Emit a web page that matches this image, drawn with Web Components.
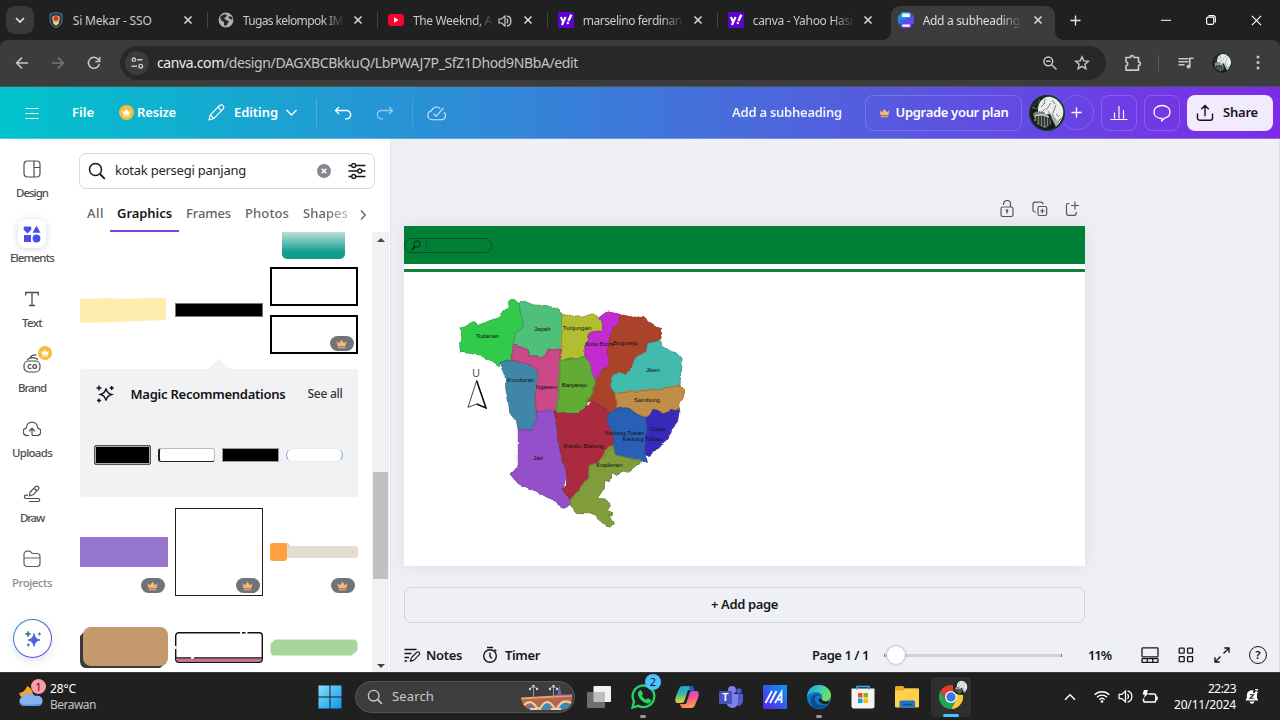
<!DOCTYPE html>
<html lang="id">
<head>
<meta charset="utf-8">
<title>Add a subheading</title>
<style>
html,body{margin:0;padding:0;overflow:hidden;background:#202020}
body{width:1280px;height:720px;font-family:"Noto Sans","Open Sans",sans-serif}
</style>
</head>
<body>
<app-shell></app-shell>
<script>
const ICONS = {
 chevDown:['0 0 12 12','<path d="M2 4l4 4 4-4" fill="none" stroke="currentColor" stroke-width="1.6"/>'],
 chevThin:['0 0 12 12','<path d="M2 4l4 4 4-4" fill="none" stroke="currentColor" stroke-width="1.1"/>'],
 x:['0 0 10 10','<path d="M1.5 1.5l7 7M8.5 1.5l-7 7" stroke="currentColor" stroke-width="1.5"/>'],
 winx:['0 0 12 12','<path d="M1 1l10 10M11 1L1 11" stroke="currentColor" stroke-width="1.3"/>'],
 plus:['0 0 12 12','<path d="M6 0.5v11M.5 6h11" stroke="currentColor" stroke-width="1.5"/>'],
 min:['0 0 10 10','<path d="M0 5.3h10" stroke="currentColor" stroke-width="1"/>'],
 restore:['0 0 10 10','<rect x=".6" y="2.1" width="7.2" height="7.2" rx="1.5" fill="none" stroke="currentColor" stroke-width="1.2"/><path d="M2.5.6h4.7a2.2 2.2 0 0 1 2.2 2.2v4.6" fill="none" stroke="currentColor" stroke-width="1.1"/>'],
 shield:['0 0 16 16','<path d="M8 .5l6 1.5v6c0 4-2.500 6-6 7.500C4.500 14 2 12 2 8V2z" fill="#16384f" stroke="#5c8796" stroke-width=".9"/><path d="M4 5c2-2 6-2 8 0l-1 6-3 3-3-3z" fill="#d9a93f"/><circle cx="8" cy="6.500" r="2.200" fill="#c72f35"/><path d="M5 9l3 2 3-2-1 3-2 1-2-1z" fill="#f3dc9a"/>'],
 globe:['0 0 16 16','<circle cx="8" cy="8" r="7.400" fill="#aeb1b6"/><path d="M3 4c2-1 4-3 6-1l-1 2-2 1 2 2 3 1-1 2-2 3-2-1V10L4 9 2 6zM11 4l3 1 .5 3-2-1-2-1z" fill="#25272a"/>'],
 yt:['0 0 18 14','<rect x="1" y="1" width="16" height="12" rx="3" fill="#f03"/><path d="M7 4.300v5.400L11.600 7z" fill="#fff"/>'],
 yahoo:['0 0 16 16','<rect width="16" height="16" fill="#5f01d1"/><path d="M2.800 5l2.400 5L7.600 5M5.200 10L4 13" fill="none" stroke="#fff" stroke-width="2.100"/><path d="M10.400 9L13.300 2.800" stroke="#fff" stroke-width="2.400"/><circle cx="9.800" cy="11" r="1.200" fill="#fff"/>'],
 canva:['0 0 16 16','<defs><linearGradient id="g" gradientUnits="userSpaceOnUse" x1="2" x2="12" y1="0" y2="16"><stop stop-color="#10c3d4"/><stop offset=".55" stop-color="#3a5ce8"/><stop offset="1" stop-color="#9b2be8"/></linearGradient></defs><path d="M5 0h6q2.500 0 2.500 2.800Q16 3 16 5.500V10q0 2.500-2.500 2.700Q13.500 16 11 16H5q-2.500 0-2.500-3.300Q0 12.500 0 10V5.500Q0 3 2.500 2.800 2.500 0 5 0z" fill="url(#g)"/><rect x="4.300" y="1.600" width="7.500" height="3.500" fill="#fff"/><rect x="4.300" y="12.500" width="7.500" height="2.200" fill="#fff"/>'],
 speaker:['0 0 14 14','<path d="M1 5h2.600L7 2v10L3.600 9H1z" fill="none" stroke="currentColor" stroke-width="1.200"/><path d="M8.800 4.800a3 3 0 0 1 0 4.400M9 1.800a5.400 5.400 0 0 1 0 10.400" fill="none" stroke="currentColor" stroke-width="1.200"/>'],
 back:['0 0 14 14','<path d="M13 7H1.800M7 1.600L1.600 7 7 12.400" fill="none" stroke="currentColor" stroke-width="1.500"/>'],
 fwd:['0 0 14 14','<path d="M1 7h11.200M7 1.600L12.400 7 7 12.400" fill="none" stroke="currentColor" stroke-width="1.500"/>'],
 reload:['0 0 14 14','<path d="M12.300 8A5.500 5.500 0 1 1 11.300 3.500L12.500 5" fill="none" stroke="currentColor" stroke-width="1.500"/><path d="M12.700 1v4.400H8.300" fill="none" stroke="currentColor" stroke-width="1.500"/>'],
 tune:['0 0 14 14','<g fill="none" stroke="currentColor" stroke-width="1.400"><circle cx="3.800" cy="3.700" r="1.700"/><path d="M7 3.700h5.500M1.500 10.200H7"/><circle cx="10.700" cy="10.200" r="1.800"/></g>'],
 zoomout:['0 0 16 16','<g fill="none" stroke="currentColor" stroke-width="1.500"><circle cx="6.300" cy="6.300" r="4.400"/><path d="M9.700 9.700l4.800 4.800M4 6.300h4.600"/></g>'],
 star:['0 0 16 16','<path d="M8 1.800l1.800 4.100 4.500.4-3.400 3 1 4.400L8 11.400l-3.900 2.300 1-4.400-3.400-3 4.500-.4z" fill="none" stroke="currentColor" stroke-width="1.400"/>'],
 ext:['0 0 18 18','<path d="M2 3.500h4.500a1.800 1.800 0 0 1 3.600 0H14.500v4.300a1.800 1.800 0 0 1 0 3.600v4.700H2v-4.300c2.400-.5 2.400-3.500 0-4z" fill="none" stroke="currentColor" stroke-width="1.700" stroke-linejoin="round"/>'],
 queue:['0 0 16 14','<path d="M.5 2.700h10M.5 5.700h10M.5 8.700h6" stroke="currentColor" stroke-width="1.400"/><circle cx="10.600" cy="10.500" r="2" fill="currentColor"/><path d="M11.800 10.500V2.200H15.500" fill="none" stroke="currentColor" stroke-width="1.600"/>'],
 dots:['0 0 4 16','<g fill="currentColor"><circle cx="2" cy="2" r="1.500"/><circle cx="2" cy="7.500" r="1.500"/><circle cx="2" cy="13" r="1.500"/></g>'],
 avatar:['0 0 36 36','<defs><clipPath id="c"><circle cx="18" cy="18" r="17.500"/></clipPath></defs><g clip-path="url(#c)"><rect width="36" height="36" fill="#151a17"/><path d="M9 15C9 6 15 1 23 1c8 1 13 8 12 15-1 6-3 10-6 14l-4-5-4-6-6 1-6-2z" fill="#eceeec"/><path d="M4 19c4-4 8-3 12 0l5 3 1 7-6 4-8-4z" fill="#7c847f"/><path d="M8 20v8M11 21v9M14 21v10M17 22v9M20 22v8" stroke="#0e120f" stroke-width="1.300"/><path d="M6 21q8-3 14 1" stroke="#f0f2f0" fill="none"/><path d="M12 12l4-4m1 7l5-7m2 10l3-8m-14 7l3-3m7-9l3 4m-10-5l-1 5m8 9l3 8M12 17l4 1m3-2l3 5m5-2l3 3" stroke="#5f6661" stroke-width=".8" fill="none"/><path d="M3 13l8-9-3 10zM4 12l4 2M27 30l5-7" stroke="#4a554e" fill="none"/><path d="M22 22l5 10 3-3-4-7z" fill="#a9afab"/><circle cx="6" cy="25" r="1.200" fill="#c4572c"/></g><circle cx="18" cy="18" r="17.200" fill="none" stroke="#12382d" stroke-width="1.600"/>'],
 burger:['0 0 14 12','<path d="M.5 1.500h13M.5 6.500h13M.5 11.500h13" stroke="currentColor" stroke-width="1.100"/>'],
 crownDisc:['0 0 14 14','<circle cx="7" cy="7" r="7" fill="#f5bd3b"/><path d="M3.200 4.800l2 1.500L7 3.500l1.800 2.800 2-1.500-.8 4H4zM4.200 9.600h5.600v1H4.200z" fill="#fff"/>'],
 crown:['0 0 10 10','<path d="M.5 3l2.300 1.800L5 1.500l2.200 3.300L9.500 3l-1 4.500h-7zM1.600 8.300h6.800v1H1.600z" fill="#ffb570"/>'],
 pencil:['0 0 17 17','<g fill="none" stroke="currentColor" stroke-width="1.200" stroke-linejoin="round"><path d="M1 16l1.300-5.200L11.500 1.600c1.200-1.100 2.600-.9 3.500 0s1.100 2.300 0 3.500L5.900 14.400zM10 3.200l3.600 3.600M2.300 10.800l3.600 3.600"/></g>'],
 undo:['0 0 18 14','<path d="M5 1L1.500 4.500 5 8M1.500 4.500h11a4.200 4.200 0 0 1 0 8.400H11" fill="none" stroke="currentColor" stroke-width="1.300"/>'],
 redo:['0 0 18 14','<path d="M13 1l3.500 3.500L13 8M16.500 4.500h-11a4.200 4.200 0 0 0 0 8.400H7" fill="none" stroke="currentColor" stroke-width="1.300"/>'],
 cloudok:['0 0 19 16','<path d="M13.300 3.600A5.400 5.400 0 0 0 4.300 6C2 6.500.8 8.200.8 10.200c0 2.600 2 4.500 4.600 4.500h8.800a4 4 0 0 0 2.600-7.200M6.500 8.700l2.700 2.500L16.500 3" fill="none" stroke="currentColor" stroke-width="1.100"/>'],
 chart:['0 0 18 18','<path d="M.5 15.500h17M4.500 14.500V8.500M9 14.500V2M13.500 14.500V6" stroke="currentColor" stroke-width="1.200"/>'],
 chat:['0 0 18 18','<path d="M9 1.500c4.500 0 8 2.700 8 6.500 0 3.400-2.600 5.500-5.500 6.200L8.800 16.800V14.500C4 14.400 1 11.700 1 8s3.500-6.500 8-6.500z" fill="none" stroke="currentColor" stroke-width="1.300"/>'],
 share:['0 0 18 18','<path d="M1.500 9.500v4.700a2 2 0 0 0 2 2h11a2 2 0 0 0 2-2V9.500M9 12.200V1.700M5.200 5.200L9 1.500l3.800 3.700" fill="none" stroke="currentColor" stroke-width="1.400"/>'],
 design:['0 0 18 18','<g fill="none" stroke="currentColor" stroke-width="1.200"><rect x="1" y="1" width="16" height="16" rx="3.500"/><path d="M11 1v16M11 7.500h6"/></g>'],
 elements:['0 0 18 18','<g fill="#454ff0"><path d="M4.500 8.500L1 5C-.5 3 1.800-.2 4.500 2 7.200-.2 9.500 3 8 5z"/><path d="M13.500.8l4 7h-8z"/><rect x="1" y="10" width="7" height="7"/><circle cx="13.500" cy="13.500" r="3.900"/></g>'],
 text:['0 0 16 16','<path d="M1.700 4.500V1.500h12.600v3M8 1.500v13M5 14.500h6" fill="none" stroke="currentColor" stroke-width="1.300"/>'],
 brand:['0 0 18 19','<g fill="none" stroke="currentColor" stroke-width="1.200"><rect x="1" y="7" width="16" height="11" rx="4.500"/><path d="M4 5.500C8 3 12 3 15 5.500M7 3.200c2-1.800 5-2.500 6.500-2"/><path d="M8.300 11a2 2 0 1 0 0 3"/><circle cx="11.700" cy="12.500" r="1.900"/></g>'],
 uploads:['0 0 18 16','<g fill="none" stroke="currentColor" stroke-width="1.200"><path d="M6 14.500H4.500A3.800 3.800 0 0 1 3.300 7C3.300 3.500 6 1 9 1s5.700 2.500 5.700 6a3.800 3.800 0 0 1-1.200 7.500H10q-1 0-1-1V7.500M6 10.200L9 7.300l3 2.900"/></g>'],
 draw:['0 0 18 18','<g fill="none" stroke="currentColor" stroke-width="1.200" stroke-linejoin="round"><path d="M6.300 11l.8-4L12.600 1.600c2-1.500 4.200.8 2.700 2.700L10 9.800zM11 3l3 3M5 10.200H3a1.600 1.600 0 0 0 0 3.300h12.200a1.500 1.500 0 0 1 0 3H6"/></g>'],
 projects:['0 0 18 18','<path d="M1 13.500V4.300A3 3 0 0 1 4 1.200h3l2.200 2.300H14a3 3 0 0 1 3 3v7a3 3 0 0 1-3 3H4a3 3 0 0 1-3-3zM1 8h16" fill="none" stroke="currentColor" stroke-width="1.200"/>'],
 sparkles:['0 0 18 18','<path d="M10 3.500Q10.800 9 16 10 10.800 11 10 16.500 9.200 11 4 10 9.200 9 10 3.500z" fill="#4b60dd" stroke="#4b60dd" stroke-width=".8"/><path d="M4 1q.4 2.700 3 3-2.600.4-3 3-.4-2.600-3-3 2.600-.3 3-3z" fill="#25848f" stroke="#25848f" stroke-width=".5"/><path d="M15.500 2q.3 1.700 2 2-1.700.3-2 2-.3-1.700-2-2 1.700-.3 2-2zM4.300 13q.3 1.700 2 2-1.700.3-2 2-.3-1.700-2-2 1.700-.3 2-2z" fill="#3d6bce"/>'],
 magic:['0 0 18 18','<path d="M10 3.500q1 4.800 5.500 6-4.500 1.200-5.500 6-1-4.800-5.500-6 4.500-1.200 5.500-6z" fill="none" stroke="currentColor" stroke-width="1.300"/><path d="M3 .5v5M.5 3h5M15.700 1v4M13.700 3h4M3 13.500v4M1 15.500h4" stroke="currentColor" stroke-width="1.400"/>'],
 search:['0 0 18 18','<circle cx="7.500" cy="7.500" r="6" fill="none" stroke="currentColor" stroke-width="1.500"/><path d="M12 12l4.800 4.800" stroke="currentColor" stroke-width="1.800"/>'],
 sliders:['0 0 18 16','<g fill="none" stroke="currentColor" stroke-width="1.300"><path d="M.5 2.500h3M8 2.500h9.500M.5 8h9M14 8h3.500M.5 13.500h3M8 13.500h9.500"/><circle cx="5.700" cy="2.500" r="2"/><circle cx="11.700" cy="8" r="2"/><circle cx="5.700" cy="13.500" r="2"/></g>'],
 clear:['0 0 14 14','<circle cx="7" cy="7" r="7" fill="#85898f"/><path d="M4.700 4.700l4.600 4.600M9.300 4.700L4.700 9.300" stroke="#fff" stroke-width="1.500"/>'],
 right:['0 0 8 12','<path d="M2 1.500L6.300 6 2 10.500" fill="none" stroke="currentColor" stroke-width="1.400"/>'],
 lock:['0 0 14 18','<g fill="none" stroke="currentColor" stroke-width="1.200"><rect x="1" y="7" width="12" height="9.500" rx="1.800"/><path d="M3.500 5V4a3.500 3.500 0 0 1 7 0v3"/></g><circle cx="7" cy="10.500" r="1.300" fill="currentColor"/><path d="M7 10.500v3" stroke="currentColor" stroke-width="1.200"/>'],
 dup:['0 0 16 16','<g fill="none" stroke="currentColor" stroke-width="1.200"><rect x="6" y="5.500" width="8.700" height="9" rx="1.500"/><path d="M4 11H3a2 2 0 0 1-2-2V3.200a2 2 0 0 1 2-2h6a2 2 0 0 1 2 2M10.400 7.700v4.600M8.100 10h4.600"/></g>'],
 addpg:['0 0 15 16','<path d="M4.500 2.500H2.700Q1.500 2.500 1.500 4v8.300a2 2 0 0 0 2 2h5.700a2 2 0 0 0 2-2v-1.500M10 .5v8M6 4.500h8" fill="none" stroke="currentColor" stroke-width="1.200"/>'],
 notes:['0 0 17 14','<g fill="none" stroke="currentColor" stroke-width="1.400"><path d="M.5 1.500h12M.5 5.500h7M.5 9.500h4.500M.5 13H3"/><path d="M6.500 13.200l.8-3.400 5.500-5.500c1.700-1.300 3.600.7 2.400 2.300L9.700 12.300z" stroke-width="1.200"/></g>'],
 timer:['0 0 16 18','<g fill="none" stroke="currentColor" stroke-width="1.400"><circle cx="8" cy="10" r="6.300"/><path d="M8 6.500V10.500l2 2M5 1.500h6M12.500 3.500l1.800 1.800"/></g>'],
 layout:['0 0 18 16','<g fill="none" stroke="currentColor" stroke-width="1.300"><rect x="1" y=".8" width="16" height="9" rx=".8"/><rect x="1" y="11.700" width="16" height="3.700" rx=".5"/><path d="M6.300 12v3M11.700 12v3"/></g>'],
 grid4:['0 0 16 16','<g fill="none" stroke="currentColor" stroke-width="1.300"><rect x="1.200" y="1.200" width="5" height="5" rx=".6"/><rect x="9.600" y="1.200" width="5" height="5" rx=".6"/><rect x="1.200" y="9.600" width="5" height="5" rx=".6"/><rect x="9.600" y="9.600" width="5" height="5" rx=".6"/></g>'],
 expand:['0 0 16 16','<path d="M9.500 6.500L15 1M10.300 1H15v4.700M6.500 9.500L1 15M5.700 15H1v-4.700" fill="none" stroke="currentColor" stroke-width="1.400"/>'],
 cloudmoon:['0 0 26 22','<path d="M1 8c4-.4 7-3 8-7 5 2 8 8 4 13-5 2-10 0-12-6z" fill="#f5a623"/><path d="M5 21a5 5 0 0 1 0-9.500c1-4 10-4.500 12-.5 4-1 8 1 7.500 5a5 5 0 0 1-4.500 5z" fill="#86b2f0"/><path d="M2 18c5 2 17 2 22 0-1 2-2 3-4 3H5q-2-1-3-3z" fill="#5f92df"/>'],
 win:['0 0 24 24','<defs><linearGradient id="w" gradientUnits="userSpaceOnUse" x2="24" y2="24"><stop stop-color="#8be0fc"/><stop offset="1" stop-color="#0b93ef"/></linearGradient></defs><path d="M.5.500h11v11H.5zM12.500.5h11v11h-11zM.5 12.500h11v11H.5zM12.500 12.500h11v11h-11z" fill="url(#w)"/>'],
 bridge:['0 0 52 26','<path d="M0 14L51 11q1 14-10 15H11Q1 24 0 14z" fill="#b0684e"/><path d="M6 25q3-6 8 0zM19 25q5-12 13 0zM36 25q6-10 13-4-3 4-8 4z" fill="#2e91c4"/><path d="M3 21q7-7 13 3l3 1q7-14 15 0l2 0q5-11 14-6" fill="none" stroke="#f3cfa0" stroke-width="2.200"/><path d="M9 25h7M30 25h10" stroke="#ead2b8" stroke-width="1.800"/><path d="M0 14.500L51 11.500" stroke="#f09d71" stroke-width="1.800"/><path d="M12.500 14V1M9 5q0-2 3.500-2t3.500 2M32.500 13V1M29 5q0-2 3.500-2t3.500 2" fill="none" stroke="#9a96b2" stroke-width="1"/><path d="M36 11.500l2.500-11 2 10h9v1z" fill="#6c63ae"/><g fill="#d7dceb"><circle cx="9" cy="5" r="1.200"/><circle cx="12.500" cy="2" r="1.200"/><circle cx="16" cy="5" r="1.200"/><circle cx="29" cy="5" r="1.200"/><circle cx="32.500" cy="2" r="1.200"/><circle cx="36" cy="5" r="1.200"/></g>'],
 task:['0 0 24 24','<rect x="6.500" y="1" width="17.500" height="16" rx="1" fill="#f2f2f2"/><rect x="0" y="7" width="18" height="16" rx="1" fill="#767676" opacity=".9"/><rect x="6.500" y="7" width="11.500" height="10" fill="#bdbdbd"/>'],
 wa:['0 0 25 25','<path d="M1.500 23.500L3 17.500a10.800 10.800 0 1 1 4.300 4.300z" fill="#202020" stroke="#27d366" stroke-width="2.300"/><path d="M8 7l2-1 2 4-1.300 1.500q1.500 3 4.500 4.200L16.700 14l3.500 2q-.5 4-4 3.500Q9 17.500 7 11q-.3-2.500 1-4z" fill="#27d366"/>'],
 copilot:['0 0 24 24','<defs><linearGradient id="a" x2=".2" y2="1"><stop stop-color="#2298ee"/><stop offset=".5" stop-color="#32b9a8"/><stop offset="1" stop-color="#f5cf24"/></linearGradient><linearGradient id="b" x2=".3" y2="1"><stop stop-color="#9d58ee"/><stop offset=".5" stop-color="#ed5299"/><stop offset="1" stop-color="#ff9b4b"/></linearGradient></defs><path d="M7 1h9q2 0 3 4l-6 0-4 12q-1 1-4 1H2Q-1 17 1 11L4 4q1-3 3-3z" fill="url(#a)"/><path d="M17 23H8q-2 0-3-4h6l4-12q1-1 4-1h3q3 1 1 7l-3 7q-1 3-3 3z" fill="url(#b)"/><path d="M14 1h3q2 1 2 5h-4z" fill="#2356c7"/>'],
 edge:['0 0 24 24','<defs><linearGradient id="e" x2="1" y2=".4"><stop stop-color="#1c9be6"/><stop offset=".5" stop-color="#36c8bf"/><stop offset="1" stop-color="#74df5d"/></linearGradient></defs><circle cx="12" cy="12" r="12" fill="#1377ca"/><path d="M0 11C1 3 7 0 12 0c7 0 12 5 12 10 0 4-3 6-6 6s-5-1-3-3c1-4-3-6-6-6-4 0-7 2-9 4z" fill="url(#e)"/><path d="M15 12c-2-3-7-2-7 2 0 4 5 8 13 5-5 6-14 6-17 0-2-5 1-10 7-10q3 0 4 3z" fill="#0d4b94"/><path d="M14.500 13.500q1 4 8 2.500l-1 2.500c-5 1.500-9.500-.5-10-3.500q.5-2.500 3-1.500z" fill="#202020"/>'],
 store:['0 0 24 24','<path d="M.5 3.500h23V21q0 2.500-2.500 2.500H3Q.5 23.500.5 21z" fill="#f4f4f4"/><path d="M6 5V1.500h12V5" fill="none" stroke="#36b6df" stroke-width="1.400"/><path d="M7 8h4.500v4.500H7z" fill="#f25022"/><path d="M12.500 8H17v4.500h-4.500z" fill="#7fba00"/><path d="M7 13.500h4.500V18H7z" fill="#00a4ef"/><path d="M12.500 13.500H17V18h-4.500z" fill="#ffb900"/>'],
 folder:['0 0 24 24','<path d="M0 2.500Q0 1 1.500 1H8l2 2.500h12.500Q24 3.500 24 5v17H0z" fill="#e9a91e"/><path d="M0 5.500L8 5.500 10 3.500H24V21q0 1.500-1.500 1.500h-21Q0 22.500 0 21z" fill="#ffd04c"/><path d="M4.500 22.500V17q0-1.500 1.500-1.500h12.500q1.500 0 1.500 1.500v5.500z" fill="#1976c7"/><path d="M8 19.500h9" stroke="#0a4a92" stroke-width="1.200"/>'],
 chrome:['0 0 24 24','<path d="M12 12L22.400 6A12 12 0 0 1 12 24l5.200-9z" fill="#fcc934"/><path d="M12 12l5.200 3L12 24A12 12 0 0 1 1.600 6l5.200 9z" fill="#23a455"/><path d="M12 6h10.400a12 12 0 0 0-20.800 0L7 15z" fill="#e33b2e"/><circle cx="12" cy="12" r="6" fill="#fff"/><circle cx="12" cy="12" r="4.700" fill="#317be8"/>'],
 up:['0 0 12 8','<path d="M1 6.800L6 1.800l5 5" fill="none" stroke="currentColor" stroke-width="1.500"/>'],
 wifi:['0 0 16 13','<g fill="none" stroke="currentColor" stroke-width="1.300"><path d="M.7 4.800a10.300 10.300 0 0 1 14.600 0M3 7.300a7 7 0 0 1 10 0M5.300 9.600a3.900 3.900 0 0 1 5.400 0"/></g><circle cx="8" cy="11.500" r="1.300" fill="currentColor"/>'],
 batt:['0 0 16 14','<path d="M6.500 4H12a1.800 1.800 0 0 1 1.800 1.800v4.400A1.800 1.800 0 0 1 12 12H3.300a1.800 1.800 0 0 1-1.800-1.800V8.500M15 6.500v3.200" fill="none" stroke="currentColor" stroke-width="1.500"/><path d="M2 0h4L4.800 3H6.500L2 8l.7-3.500H.5z" fill="currentColor"/>'],
 bell:['0 0 14 15','<path d="M.5 11.500L1.800 9V6a5 5 0 0 1 6.700-4.500L8 4h4v5l1.300 2.500zM4.500 12.500h5q-.5 2.200-2.500 2.200t-2.500-2.200z" fill="currentColor"/><path d="M10 .7h3L10 3.500h3" fill="none" stroke="currentColor" stroke-width="1"/><path d="M5 5.800h3.500L5 9.300h3.700" fill="none" stroke="#202020" stroke-width="1.100"/>'],
};

/* Registers an element whose shadow root holds the given styles and markup. */
function define(tag, css, html){
  const t = document.createElement('template');
  t.innerHTML = '<style>*{box-sizing:border-box}[hidden]{display:none}'+css+'</style>'+html;
  customElements.define(tag, class extends HTMLElement{
    constructor(){ super(); this.attachShadow({mode:'open'}).append(t.content.cloneNode(true)); }
  });
}

customElements.define('ui-icon', class extends HTMLElement{
  connectedCallback(){
    if(this.shadowRoot) return;
    const [vb,body] = ICONS[this.getAttribute('name')];
    const p = vb.split(' ');
    const w = this.getAttribute('w') || p[2], h = this.getAttribute('h') || w*p[3]/p[2];
    this.attachShadow({mode:'open'}).innerHTML =
      `<style>:host{display:block;flex:none;width:${w}px;height:${h}px}svg{display:block;width:100%;height:100%}</style><svg viewBox="${vb}">${body}</svg>`;
  }
});

/* One line of text tracked so that it is exactly w pixels wide. */
customElements.define('fit-text', class extends HTMLElement{
  connectedCallback(){
    if(this.shadowRoot) return;
    const w = +this.getAttribute('w');
    this.attachShadow({mode:'open'}).innerHTML =
      `<style>:host{display:block;flex:none;width:${w}px;white-space:pre;line-height:1.3}span{display:inline-block}</style><span><slot></slot></span>`;
    const s = this.shadowRoot.querySelector('span');
    const n = this.textContent.length;
    s.style.letterSpacing = ((w - s.getBoundingClientRect().width)/n).toFixed(3)+'px';
  }
});

define('browser-tab', `
:host{display:flex;width:170px;height:40px;align-items:center;position:relative;color:#c9cacc;font-size:12px}
.ic{width:18px;margin-left:9px;display:flex;justify-content:center}
.t{margin-left:8px;width:104px;display:flex;align-items:center;padding-top:1px}
ui-icon[name=x]{margin-left:8px;color:#dcdcdc}
i{width:1px;height:16px;background:#444;margin-left:14px}
:host([last]) i{visibility:hidden}
.bg{display:none}
:host([active]){color:#dedede}
:host([active]) .bg{display:block;position:absolute;z-index:-1;left:3px;right:3px;top:6px;bottom:0;background:#3c3c3c;border-radius:9px 9px 0 0}
:host([active]) .bg::before,:host([active]) .bg::after{content:"";position:absolute;bottom:0;width:8px;height:8px;left:-8px;background:radial-gradient(circle at 0 0,transparent 7.500px,#3c3c3c 8px)}
:host([active]) .bg::after{left:auto;right:-8px;background:radial-gradient(circle at 100% 0,transparent 7.500px,#3c3c3c 8px)}
`, `<div class="bg"></div><div class="ic"><slot name="icon"></slot></div><div class="t"><slot></slot></div><ui-icon name="x"></ui-icon><i></i>`);

define('tab-strip', `
:host{display:flex;height:40px;background:#202020;align-items:center;color:#e6e6e6;position:relative;z-index:0}
.dd{width:28px;height:28px;border-radius:9px;background:#3a3a3a;margin:0 4px 0 6px;display:grid;place-items:center}
.fade{-webkit-mask-image:linear-gradient(90deg,#000 80%,transparent 102%)}
ui-icon[name=speaker]{margin-left:6px}
.win{margin-left:auto;margin-right:18px;display:flex;gap:35px;align-items:center;color:#fff}
`, `<div class="dd"><ui-icon name="chevDown"></ui-icon></div>
<browser-tab><ui-icon slot="icon" name="shield"></ui-icon><fit-text w="79">Si Mekar - SSO</fit-text></browser-tab>
<browser-tab><ui-icon slot="icon" name="globe"></ui-icon><fit-text class="fade" w="100">Tugas kelompok IM</fit-text></browser-tab>
<browser-tab><ui-icon slot="icon" name="yt"></ui-icon><fit-text class="fade" w="79">The Weeknd, A</fit-text><ui-icon name="speaker"></ui-icon></browser-tab>
<browser-tab><ui-icon slot="icon" name="yahoo"></ui-icon><fit-text class="fade" w="99">marselino ferdinan</fit-text></browser-tab>
<browser-tab last><ui-icon slot="icon" name="yahoo"></ui-icon><fit-text class="fade" w="100">canva - Yahoo Hasi</fit-text></browser-tab>
<browser-tab active last><ui-icon slot="icon" name="canva"></ui-icon><fit-text class="fade" w="97">Add a subheading</fit-text></browser-tab>
<ui-icon name="plus" w="11" style="margin-left:12px"></ui-icon>
<div class="win"><ui-icon name="min"></ui-icon><ui-icon name="restore"></ui-icon><ui-icon name="winx" w="11"></ui-icon></div>`);

define('address-bar', `
:host{display:flex;height:47px;background:#3c3c3c;align-items:center;color:#c7c7c7;padding-left:15px;border-radius:8px 8px 0 0;border-bottom:1px solid #4a5558}
.omni{width:986px;height:34px;border-radius:17px;background:#282828;margin-left:19px;display:flex;align-items:center;padding:0 14px 0 5px}
.tune{width:24px;height:24px;border-radius:50%;background:#3c3c3c;display:grid;place-items:center;margin-right:8px}
fit-text{font-size:14px;color:#c4c4c4;padding-top:1px} b{font-weight:400;color:#ededed}
.sep{width:1px;height:16px;background:#5a5a5a;margin:0 19px 0 16px}
`, `<ui-icon name="back"></ui-icon><ui-icon name="fwd" style="margin-left:22px;color:#757575"></ui-icon><ui-icon name="reload" style="margin-left:22px"></ui-icon>
<div class="omni"><div class="tune"><ui-icon name="tune"></ui-icon></div><fit-text w="421"><b>canva.com</b>/design/DAGXBCBkkuQ/LbPWAJ7P_SfZ1Dhod9NBbA/edit</fit-text>
<ui-icon name="zoomout" style="margin-left:auto"></ui-icon><ui-icon name="star" style="margin-left:16px;margin-right:2px"></ui-icon></div>
<ui-icon name="ext" style="margin-left:18px"></ui-icon><div class="sep"></div><ui-icon name="queue"></ui-icon><ui-icon name="avatar" w="20" style="margin-left:18px"></ui-icon><ui-icon name="dots" style="margin-left:24px"></ui-icon>`);

define('editor-header', `
:host{display:flex;height:52px;background:linear-gradient(90deg,#00c4cc,#7d2ae8);align-items:center;color:#fff;font-size:13px;font-weight:600;padding-left:25px;border-bottom:1px solid rgba(255,255,255,.25)}
.sep{width:1px;height:29px;background:rgba(255,255,255,.2)}
.btn{height:36px;border:1px solid rgba(255,255,255,.18);border-radius:8px;display:flex;align-items:center;justify-content:center}
.sq{width:36px;margin-left:8px}
.round{width:35px;height:35px;border:1px solid rgba(255,255,255,.15);border-radius:50%;margin-left:-6px;display:grid;place-items:center}
.share{width:86px;height:36px;border-radius:8px;background:#f2eafd;color:#16151b;margin-left:7px;display:flex;align-items:center;gap:9px;padding-left:9px}
ui-icon[name=avatar]{position:relative;z-index:1}
`, `<ui-icon name="burger"></ui-icon><fit-text w="22" style="margin-left:33px">File</fit-text>
<ui-icon name="crownDisc" w="15" style="margin-left:25px"></ui-icon><fit-text w="39" style="margin-left:3px">Resize</fit-text>
<ui-icon name="pencil" style="margin-left:32px"></ui-icon><fit-text w="44" style="margin-left:9px">Editing</fit-text><ui-icon name="chevThin" w="15" style="margin-left:6px"></ui-icon>
<div class="sep" style="margin-left:17px"></div><ui-icon name="undo" style="margin-left:17px"></ui-icon><ui-icon name="redo" style="margin-left:24px;opacity:.5"></ui-icon>
<div class="sep" style="margin-left:18px;opacity:.6"></div><ui-icon name="cloudok" style="margin-left:14px;opacity:.8"></ui-icon>
<fit-text w="110" style="margin-left:286px;opacity:.9">Add a subheading</fit-text>
<div class="btn" style="margin-left:23px;width:157px;gap:6px"><ui-icon name="crown" w="11"></ui-icon><fit-text w="113">Upgrade your plan</fit-text></div>
<ui-icon name="avatar" style="margin-left:7px"></ui-icon><div class="round"><ui-icon name="plus" w="11"></ui-icon></div>
<div class="btn sq" style="margin-left:7px"><ui-icon name="chart"></ui-icon></div><div class="btn sq" style="margin-left:7px"><ui-icon name="chat"></ui-icon></div>
<div class="share"><ui-icon name="share"></ui-icon><fit-text w="35">Share</fit-text></div>`);

define('nav-item', `
:host{display:flex;flex-direction:column;align-items:center;height:65px;color:#4a4d52;font-size:11.500px;font-weight:500;position:relative}
.tile{width:28px;height:29px;display:grid;place-items:center;border-radius:8px}
:host([active]) .tile{box-shadow:0 1px 7px rgba(60,70,110,.22);background:#fff}
.lab{margin-top:3px}
:host([dim]){color:#8b8e92}:host([dim]) .tile{color:#5c5f63}
::slotted([slot=badge]){position:absolute;left:38px;top:-3px}
`, `<div class="tile"><slot name="icon"></slot></div><div class="lab"><slot></slot></div><slot name="badge"></slot>`);

define('side-nav', `
:host{display:block;box-sizing:border-box;width:65px;padding-top:15px;padding-right:1px;background:#fff}
.orb{width:39px;height:39px;border-radius:50%;margin:10px auto 0 13px;border:1.500px solid transparent;background:linear-gradient(#fff,#fff) padding-box,linear-gradient(135deg,#17a9bd,#4b60dd,#8a35e0) border-box;box-shadow:0 3px 8px rgba(70,80,120,.16);display:grid;place-items:center}
`, `<nav-item><ui-icon slot="icon" name="design"></ui-icon><fit-text w="32">Design</fit-text></nav-item>
<nav-item active><ui-icon slot="icon" name="elements"></ui-icon><fit-text w="44">Elements</fit-text></nav-item>
<nav-item><ui-icon slot="icon" name="text"></ui-icon><fit-text w="20">Text</fit-text></nav-item>
<nav-item><ui-icon slot="icon" name="brand"></ui-icon><fit-text w="28">Brand</fit-text><ui-icon slot="badge" name="crownDisc"></ui-icon></nav-item>
<nav-item><ui-icon slot="icon" name="uploads"></ui-icon><fit-text w="40">Uploads</fit-text></nav-item>
<nav-item><ui-icon slot="icon" name="draw"></ui-icon><fit-text w="24">Draw</fit-text></nav-item>
<nav-item dim><ui-icon slot="icon" name="projects"></ui-icon><fit-text w="40">Projects</fit-text></nav-item>
<div class="orb"><ui-icon name="sparkles"></ui-icon></div>`);

define('pro-badge', `:host{position:absolute;right:3px;bottom:3px;width:24px;height:15px;border-radius:8px;background:#707478;display:grid;place-items:center}`,
 `<ui-icon name="crown" w="11"></ui-icon>`);

define('magic-box', `
:host{display:block;position:relative;height:128px;background:#f1f2f4;border-radius:3px;padding:15px 14px}
:host::before{content:"";position:absolute;left:128px;top:-10px;border:11px solid transparent;border-top:0;border-bottom:10px solid #f1f2f4}
.h{display:flex;align-items:center;color:#111317;font-size:13px;font-weight:600;height:20px;margin-left:2px}
.row{display:grid;grid-template-columns:repeat(4,57px);column-gap:7px;align-items:center;height:22px;margin-top:40px}
.row div{height:14px}
`, `<div class="h"><ui-icon name="magic"></ui-icon><fit-text w="155" style="margin-left:17px">Magic Recommendations</fit-text><fit-text w="35" style="margin-left:22px;font-size:12px;font-weight:500;color:#33363b">See all</fit-text></div>
<div class="row"><div style="height:20px;background:#000;border:1px solid #555;border-radius:2px;box-shadow:inset 0 0 0 1px #aaa"></div>
<div style="background:#fff;border-radius:3px;border:1px solid #bbb;border-left:2px solid #222;border-bottom:1.500px solid #222"></div>
<div style="background:#000;border:1px solid #999"></div>
<div style="background:#fff;border-radius:7px;border:1px solid #e6ebf4;border-left-color:#88a9d6;border-right-color:#88a9d6"></div></div>`);

define('elements-panel', `
:host{display:flex;flex-direction:column;box-sizing:border-box;width:325px;background:#fff;padding-top:14px;height:533px}
.search{margin-left:14px;width:296px;height:36px;border:1px solid #d5d8dc;border-radius:7px;display:flex;align-items:center;padding:0 8px;color:#15171a}
.search fit-text{font-size:13px;margin-left:9px;margin-top:-1px;color:#25282c}
.tabs{height:43px;display:flex;padding:16px 0 0 22px;font-size:13px;font-weight:500;color:#62656b;position:relative}
.tabs ui-icon{margin:4px 0 0 11px}
.tabs .on{color:#15171b;font-weight:600;height:27px;width:69px;margin:0 7px 0 6px;padding-left:7px;border-bottom:2px solid #7b45dd}
.body{flex:1;display:flex;min-height:0;overflow:hidden}
.list{width:307px;padding-left:14.500px;overflow:hidden}
.g{display:grid;grid-template-columns:88px 88px 88px;column-gap:7px}
.c{position:relative;display:grid;place-items:center;width:88px}
.box{width:88px;height:39px;border:2px solid #000;position:relative}
.bar{width:17px;background:#f1f1f1;display:flex;flex-direction:column;align-items:center;padding:6px 0 4px}
.thumb{width:15px;height:107px;background:#c1c1c1;margin-top:229.500px;margin-bottom:auto}
.a{border:4px solid transparent;border-bottom:4.500px solid #444;border-top:0}.d{border:4px solid transparent;border-top:4.500px solid #444;border-bottom:0}
svg{display:block}
`, `<div class="search"><ui-icon name="search"></ui-icon><fit-text w="131">kotak persegi panjang</fit-text><ui-icon name="clear" style="margin-left:71px"></ui-icon><ui-icon name="sliders" style="margin-left:17px"></ui-icon></div>
<div class="tabs"><fit-text w="17">All</fit-text><div class="on"><fit-text w="55">Graphics</fit-text></div><fit-text w="45">Frames</fit-text><fit-text w="44" style="margin-left:14px">Photos</fit-text><fit-text w="45" style="margin-left:14px;-webkit-mask-image:linear-gradient(90deg,#000 45%,rgba(0,0,0,.4))">Shapes</fit-text><ui-icon name="right"></ui-icon></div>
<div class="body"><div class="list">
<div class="g" style="height:137px">
 <div class="c" style="padding-top:19px"><svg width="88" height="26" viewBox="0 0 88 26"><path d="M0 2l28-1 18 1 20-1 20 0v22l-25 1-25 1-36 1z" fill="#ffedae"/></svg></div>
 <div class="c" style="padding-top:19px"><div style="width:88px;height:14px;background:#000;border:1px solid #777"></div></div>
 <div class="c" style="place-items:start center;align-content:start"><div style="width:63px;height:27px;background:linear-gradient(#bce0db,#109d8e 75%);border-radius:0 0 5px 5px"></div><div class="box" style="margin-top:8px"></div><div class="box" style="margin-top:9px"><pro-badge style="right:2px;bottom:1px"></pro-badge></div></div>
</div>
<magic-box style="width:278px"></magic-box>
<div class="g" style="margin-top:11px;height:88px">
 <div class="c"><div style="width:88px;height:30px;background:#9675cf"></div><pro-badge></pro-badge></div>
 <div class="c" style="border:1px solid #222"><pro-badge style="right:2px;bottom:2px"></pro-badge></div>
 <div class="c"><svg width="88" height="18" viewBox="0 0 88 18"><rect x="3" y="3" width="85" height="12" rx="3" fill="#e5ddd1"/><path d="M10 0h8l3 4h-5z" fill="#dfd2c0"/><rect width="17" height="18" rx="3" fill="#ff9f40"/></svg><pro-badge></pro-badge></div>
</div>
<div class="g" style="margin-top:31px;height:41px">
 <div class="c"><svg width="88" height="41" viewBox="0 0 88 41"><path d="M6 3L0 9v26q1 6 6 6h74l6-5z" fill="#3c3a36"/><rect x="3" y="0" width="85" height="39" rx="8" fill="#c49a6c"/></svg></div>
 <div class="c"><svg width="88" height="31" viewBox="0 0 88 31"><rect x=".7" y=".7" width="86.600" height="29.600" rx="3" fill="#fff" stroke="#111" stroke-width="1.400"/><path d="M1.500 26.300h85V28q0 1.500-2 1.500h-81q-2 0-2-1.500z" fill="#d4688f"/><path d="M1 25.800h86" stroke="#111" stroke-width="1.300"/><path d="M65 .7h2M70.500.7h2M.7 14v3M16 25.800h3" stroke="#fff" stroke-width="2"/></svg></div>
 <div class="c"><svg width="88" height="17" viewBox="0 0 88 17"><path d="M5 .5h78q4 0 4.500 4v7l-6 5H4q-3.500 0-3.500-4V5z" fill="#a8d59b"/></svg></div>
</div>
</div><div class="bar"><div class="a"></div><div class="thumb"></div><div class="d"></div></div></div>`);

const regions = [
 ['#32ca4b','30,112 75,98 80,107 143,85 160,62 177,55 180,30 192,28 208,42 212,75 222,95 222,110 196,130 190,165 187,185 185,213 150,217 148,230 125,215 105,208 92,195 60,190 32,187 29,165 36,145'],
 ['#4fc079','208,42 222,33 250,45 290,47 330,60 335,75 335,180 295,180 290,195 278,203 262,198 238,198 235,180 210,170 190,165 196,130 222,110 220,92 212,75'],
 ['#b2bd31','335,72 365,80 395,82 425,72 445,75 452,90 458,105 458,125 420,130 405,165 405,200 370,207 332,212'],
 ['#c32bcf','450,80 475,63 510,70 505,105 487,115 480,140 470,190 480,220 470,235 455,240 445,255 438,278 430,255 418,225 405,200 405,165 420,130 458,125 458,100'],
 ['#ab432b','510,70 530,78 550,82 582,80 600,98 635,118 632,150 595,158 585,180 560,200 540,240 525,250 490,252 482,285 495,315 500,360 478,372 455,352 435,335 412,335 430,305 438,278 455,240 480,223 470,190 487,115 505,105'],
 ['#43bbae','628,152 640,170 665,185 680,190 693,205 690,287 650,292 590,302 540,307 495,310 482,290 490,252 525,250 545,240 560,203 586,182 595,160'],
 ['#c18e47','495,310 560,303 640,295 690,285 704,300 700,330 685,345 690,365 640,372 612,360 605,375 590,390 560,372 530,352 500,357'],
 ['#4086a9','150,217 187,211 225,218 262,240 265,260 255,290 258,350 262,390 255,400 245,420 205,420 200,395 180,370 175,330 168,300 165,250'],
 ['#cb4888','190,165 210,170 235,180 238,198 262,198 278,203 295,180 334,178 332,240 325,330 318,366 258,366 256,340 258,300 265,240 225,218 187,212'],
 ['#62ac35','330,212 370,205 405,200 418,225 436,278 430,305 412,335 410,347 385,368 355,372 318,360 325,310'],
 ['#944fca','260,362 316,364 322,420 330,480 350,545 340,598 360,630 364,645 340,655 310,632 260,604 205,581 180,552 205,525 205,420 245,420 258,390'],
 ['#ab293f','312,362 355,372 385,368 410,347 433,332 455,350 480,370 472,400 492,440 490,468 470,490 440,520 418,525 415,565 395,590 362,630 336,598 350,590 350,545 330,480 322,420'],
 ['#2c5fb6','475,372 500,355 530,350 560,372 590,387 590,465 585,490 592,517 570,512 530,503 500,495 490,465 492,440 473,400'],
 ['#372cb9','590,387 612,358 640,372 665,362 688,360 682,395 665,415 662,430 645,450 630,470 615,485 600,497 585,490'],
 ['#809c3b','475,472 490,466 500,495 530,503 570,507 570,520 545,540 530,550 522,542 500,557 485,545 478,575 465,570 462,595 442,625 470,628 482,645 470,665 488,670 486,678 476,676 490,700 480,712 455,697 440,675 415,668 380,668 362,650 360,630 395,590 415,560 418,525 440,520'],
];
const labels = [['Todanan',112,144,70],['Japah',277,122,50],['Tunjungan',381,119,86],['Kota Blora',448,168,86],['Bogorejo',527,165,74],['Kunduran',212,275,80],['Ngawen',289,298,66],['Banjarejo',373,292,76],['Jiken',609,246,42],['Sambong',591,336,78],['Kedung Tuban',523,434,118],['Kedung Tuban',577,453,118],['Cepu',624,422,43],['Randu Blatung',401,474,122],['Jati',264,511,29],['Kradenan',478,531,78]];

define('region-map', `:host{display:block;width:250px;height:250px}svg{display:block}text{font-family:"Liberation Sans",sans-serif;font-size:18.500px;fill:#111}`,
 `<svg width="250" height="250" viewBox="0 0 750 750"><filter id="r" x="0" y="0" width="1" height="1"><feTurbulence type="fractalNoise" baseFrequency=".035" numOctaves="2" seed="4"/><feDisplacementMap in="SourceGraphic" scale="11" xChannelSelector="R" yChannelSelector="G"/></filter><g filter="url(#r)"><g stroke-linejoin="round" stroke-width="3">${regions.map(r=>`<polygon fill="${r[0]}" stroke="${r[0]}" points="${r[1]}"/>`).join('')}</g><g fill="none" stroke="#40403a" stroke-opacity=".4" stroke-width="1.500">${regions.map(r=>`<polygon points="${r[1]}"/>`).join('')}</g></g>
 ${labels.map(l=>`<text x="${l[1]-l[3]/2}" y="${l[2]}" textLength="${l[3]}">${l[0]}</text>`).join('')}
 <text x="67" y="262" textLength="23" lengthAdjust="spacingAndGlyphs" style="font:34px 'Liberation Sans',sans-serif;fill:#555">U</text>
 <path d="M80 272L54 352 80 342 108 354z" fill="#fff" stroke="#222" stroke-width="2.500"/><path d="M80 272L108 354 80 342" fill="none" stroke="#111" stroke-width="4.500"/></svg>`);

define('design-page', `
:host{display:block;width:681px;height:340px;background:#fff;box-shadow:0 0 18px rgba(60,70,90,.1)}
.band{height:38px;background:#008037;padding-top:12px}
.pill{width:88px;height:15px;border:1px solid #0a4a20;border-radius:8px;display:flex;align-items:center;padding-left:6px}
.pill i{width:1px;height:11px;background:#06602b;margin-left:5px}
.line{margin-top:5.500px;height:3px;background:#128040}
region-map{margin:18px 0 0 46px}
`, `<div class="band"><div class="pill"><svg width="10" height="11" viewBox="0 0 10 11"><circle cx="6" cy="4" r="3.200" fill="none" stroke="#042b12"/><path d="M3.800 6.500L1 10" stroke="#042b12" stroke-width="1.700"/></svg><i></i></div></div><div class="line"></div><region-map></region-map>`);

define('design-canvas', `
:host{display:flex;flex-direction:column;box-sizing:border-box;flex:1;background:#eff0f5;border-left:1px solid #e4e5ea;border-right:1px solid #dfe1e7;padding-left:13px;color:#15171b}
.tools{display:flex;gap:16px;height:18px;width:681px;justify-content:flex-end;align-items:center;padding-right:5px;margin-top:60.500px;color:#55585e}
design-page{margin-top:8px}
.add{width:681px;height:36px;border:1px solid #cfd1d6;border-radius:7px;margin-top:21.500px;display:flex;align-items:center;justify-content:center;font-size:13px;font-weight:600;padding-bottom:2px}
.foot{display:flex;height:49px;align-items:center;font-size:13px;font-weight:600;padding-top:15px}
.track{width:178px;height:3px;background:#d1d3d8;margin-left:15px;border:solid #777;border-width:0 1px;position:relative}
.track::after{content:"";position:absolute;left:2px;top:-8px;width:18px;height:18px;border-radius:50%;background:#fff;box-shadow:0 0 3px rgba(0,0,0,.4)}
.q{width:18px;height:18px;border:1.300px solid #15171b;border-radius:50%;text-align:center;font-size:11.500px;line-height:16px;font-weight:600;margin-left:19px}
`, `<div class="tools"><ui-icon name="lock"></ui-icon><ui-icon name="dup" style="margin-left:2px"></ui-icon><ui-icon name="addpg" style="margin-left:1px"></ui-icon></div>
<design-page></design-page>
<div class="add"><fit-text w="67">+ Add page</fit-text></div>
<div class="foot"><ui-icon name="notes"></ui-icon><fit-text w="36" style="margin-left:5px">Notes</fit-text><ui-icon name="timer" style="margin-left:20px"></ui-icon><fit-text w="35" style="margin-left:7px">Timer</fit-text>
<fit-text w="57" style="margin-left:272px">Page 1 / 1</fit-text><div class="track"></div><fit-text w="23" style="margin-left:26px">11%</fit-text>
<ui-icon name="layout" style="margin-left:30px"></ui-icon><ui-icon name="grid4" style="margin-left:19px"></ui-icon><ui-icon name="expand" style="margin-left:20px"></ui-icon><div class="q">?</div></div>`);

define('task-app', `
:host{display:grid;place-items:center;width:44px;height:44px;position:relative;border-radius:4px}
:host([on]){background:#2f2f2f;width:40px;height:40px;margin:0 2px}
:host([run])::after,:host([on])::after{content:"";position:absolute;bottom:1px;left:19px;width:6px;height:3px;border-radius:2px;background:#9a9a9a}
:host([on])::after{left:12px;width:16px;background:#4cc2ff;bottom:0}
::slotted([slot=badge]){position:absolute;left:23px;top:5px}
`, `<slot></slot><slot name="badge"></slot>`);

define('task-bar', `
:host{display:flex;box-sizing:border-box;height:48px;background:#202020;align-items:center;color:#fff;border-top:1px solid #393939;font-size:12px}
.weather{position:relative;margin-left:18px;height:34px;display:flex;align-items:center}
.n{position:absolute;left:13px;top:-1px;width:15px;height:15px;border-radius:50%;background:#ff99a4;color:#222;font-size:11px;line-height:15px;text-align:center}
.w2{margin-left:6px}
.s{width:220px;height:32px;border-radius:16px;background:#3d3d3d;border:1px solid #555;display:flex;align-items:center;padding-left:11px;margin:0 2px 0 13px;font-size:13px;color:#c9c9c9}
.two{width:16px;height:16px;border-radius:50%;background:#4cc2ff;color:#113;font-size:11px;line-height:16px;text-align:center}
.clock{margin-left:16px;display:flex;flex-direction:column;align-items:flex-end}
svg{display:block}
`, `<div class="weather"><ui-icon name="cloudmoon" style="margin-top:-2px"></ui-icon><span class="n">1</span><div class="w2"><fit-text w="26">28°C</fit-text><fit-text w="46" style="color:#c2c2c2">Berawan</fit-text></div></div>
<ui-icon name="win" style="margin-left:222px"></ui-icon>
<div class="s"><ui-icon name="search" w="16"></ui-icon><fit-text w="42" style="margin-left:9px">Search</fit-text><ui-icon name="bridge" style="margin-left:87px"></ui-icon></div>
<task-app><ui-icon name="task"></ui-icon></task-app>
<task-app run><ui-icon name="wa"></ui-icon><div slot="badge" class="two" style="top:-1px;left:24px">2</div></task-app>
<task-app><ui-icon name="copilot"></ui-icon></task-app>
<task-app><svg width="24" height="24" viewBox="0 0 24 24"><circle cx="13" cy="5" r="4" fill="#7b83eb"/><circle cx="20" cy="6" r="2.700" fill="#5059c9"/><path d="M16 9h8v7q-1 5-5 5h-3z" fill="#5059c9"/><path d="M7 9h12v8q-1 6-6 6-5-1-6-6z" fill="#7b83eb"/><rect y="6" width="13" height="13" rx="1.500" fill="#4b53bc"/><text x="3.200" y="16" style="font:bold 10px 'Liberation Sans',sans-serif" fill="#fff">T</text></svg></task-app>
<task-app><svg width="24" height="24" viewBox="0 0 24 24"><defs><linearGradient id="m" x1="0" y1="1" x2="1" y2="0"><stop stop-color="#5a20ee"/><stop offset="1" stop-color="#079bf5"/></linearGradient></defs><rect width="24" height="24" fill="url(#m)"/><path d="M2.500 18L9 6M7 18l6.500-12M12 18l6.500-11v11M15 14.500h4" fill="none" stroke="#fff" stroke-width="1.800"/></svg></task-app>
<task-app run><ui-icon name="edge"></ui-icon></task-app>
<task-app><ui-icon name="store"></ui-icon></task-app>
<task-app><ui-icon name="folder"></ui-icon></task-app>
<task-app on><ui-icon name="chrome"></ui-icon><ui-icon slot="badge" name="avatar" w="15" style="top:3px;left:22px"></ui-icon></task-app>
<ui-icon name="up" style="margin-left:91px"></ui-icon><ui-icon name="wifi" style="margin-left:18px"></ui-icon><ui-icon name="speaker" w="15" style="margin-left:8px"></ui-icon><ui-icon name="batt" style="margin-left:9px"></ui-icon>
<div class="clock"><fit-text w="28">22:23</fit-text><fit-text w="62">20/11/2024</fit-text></div><ui-icon name="bell" style="margin-left:9px"></ui-icon>`);

define('app-shell', `:host{display:flex;flex-direction:column;width:1280px;height:720px;overflow:hidden;background:#202020}main{display:flex;height:533px;background:#fff}`,
 `<tab-strip></tab-strip><address-bar></address-bar><editor-header></editor-header><main><side-nav></side-nav><elements-panel></elements-panel><design-canvas></design-canvas></main><task-bar></task-bar>`);
</script>
</body>
</html>
